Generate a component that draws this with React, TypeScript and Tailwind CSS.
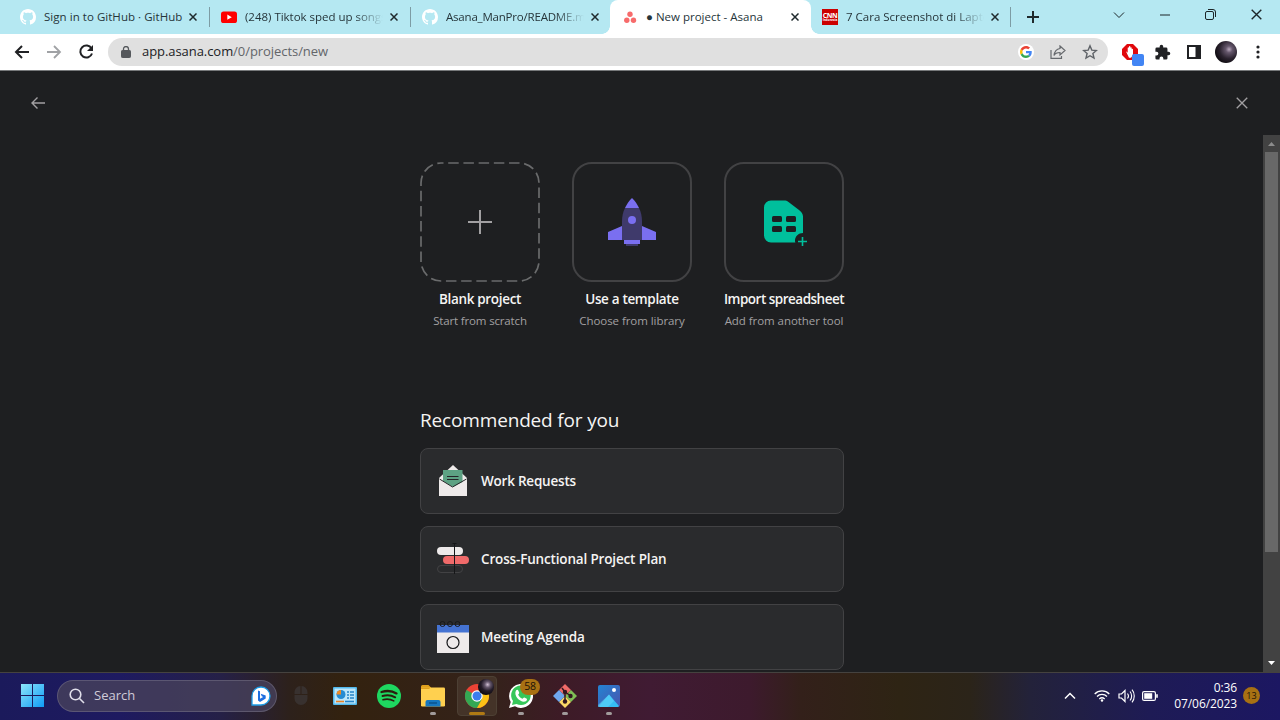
import React from 'react';

type SvgProps = { className?: string };

const Github = () => (
  <svg viewBox="0 0 16 16" className="size-4 shrink-0" fill="#fff">
    <path d="M8 0C3.58 0 0 3.58 0 8c0 3.54 2.29 6.53 5.47 7.59.4.07.55-.17.55-.38 0-.19-.01-.82-.01-1.49-2.01.37-2.53-.49-2.69-.94-.09-.23-.48-.94-.82-1.13-.28-.15-.68-.52-.01-.53.63-.01 1.08.58 1.23.82.72 1.21 1.87.87 2.33.66.07-.52.28-.87.51-1.07-1.78-.2-3.64-.89-3.64-3.95 0-.87.31-1.59.82-2.15-.08-.2-.36-1.02.08-2.12 0 0 .67-.21 2.2.82.64-.18 1.32-.27 2-.27s1.36.09 2 .27c1.53-1.04 2.2-.82 2.2-.82.44 1.1.16 1.92.08 2.12.51.56.82 1.27.82 2.15 0 3.07-1.87 3.75-3.65 3.95.29.25.54.73.54 1.48 0 1.07-.01 1.93-.01 2.2 0 .21.15.46.55.38A8.01 8.01 0 0 0 16 8c0-4.42-3.58-8-8-8z" />
  </svg>
);

const Youtube = () => (
  <svg viewBox="0 0 16 16" className="size-4 shrink-0">
    <rect y="2.5" width="16" height="11.5" rx="2.6" fill="#f00" />
    <path d="M6.3 5.6v5.2L10.8 8.2z" fill="#fff" />
  </svg>
);

const AsanaLogo = () => (
  <svg viewBox="0 0 16 16" className="size-4 shrink-0" fill="#f76b6b">
    <circle cx="8" cy="5.3" r="2.7" />
    <circle cx="4.8" cy="11.3" r="2.7" />
    <circle cx="11.5" cy="11.3" r="2.7" />
  </svg>
);

const Cnn = () => (
  <span className="flex size-4 shrink-0 flex-col items-center justify-center bg-[#c00] font-bold text-white">
    <span className="text-[7px] leading-[7px] tracking-[-0.4px]">CNN</span>
    <span className="text-[3px] leading-[3px]">Indonesia</span>
  </span>
);

const Cross = ({ className }: SvgProps) => (
  <svg viewBox="0 0 8 8" className={className} fill="none" stroke="currentColor">
    <path d="M.5.5l7 7m0-7l-7 7" />
  </svg>
);

type TabProps = { icon: React.ReactNode; title: string; titleClass: string; active?: boolean; divider?: boolean; fade?: boolean; className: string };

function Tab({ icon, title, titleClass, active, divider, fade, className }: TabProps) {
  return (
    <div className={`relative flex h-[34px] shrink-0 items-center ${active ? 'z-10 rounded-t-lg bg-white' : ''} ${className}`}>
      {icon}
      <span className={`ml-2 w-[140px] shrink-0 overflow-hidden whitespace-nowrap text-[11.5px] text-[#26353a] ${fade ? '[mask-image:linear-gradient(90deg,#000_110px,transparent_138px)]' : ''} ${titleClass}`}>{title}</span>
      <Cross className="ml-[5px] size-2 shrink-0 stroke-[1.5] text-[#1f2a2d]" />
      {divider && <span className="absolute right-0 top-[7px] h-5 w-px bg-[#7d9ca4]" />}
      {active && (
        <>
          <span className="absolute bottom-0 -left-2 size-2 bg-[radial-gradient(circle_at_0_0,transparent_7.5px,#fff_8px)]" />
          <span className="absolute -right-2 bottom-0 size-2 bg-[radial-gradient(circle_at_100%_0,transparent_7.5px,#fff_8px)]" />
        </>
      )}
    </div>
  );
}

function TabBar() {
  return (
    <div className="flex h-[34px] bg-[#b5e8f2]">
      <Tab className="w-[210px] pl-5" icon={<Github />} title="Sign in to GitHub · GitHub" titleClass="tracking-[0.04px]" divider />
      <Tab className="w-[201px] pl-[11px]" icon={<Youtube />} title="(248) Tiktok sped up songs" titleClass="tracking-[-0.02px]" divider fade />
      <Tab className="w-[199px] pl-[11px]" icon={<Github />} title="Asana_ManPro/README.md" titleClass="tracking-[-0.2px]" fade />
      <Tab className="w-[201px] pl-3" icon={<AsanaLogo />} title="● New project - Asana" titleClass="tracking-[0px]" active />
      <Tab className="w-[200px] pl-[11px]" icon={<Cnn />} title="7 Cara Screenshot di Laptop" titleClass="tracking-[0px]" divider fade />
      <svg viewBox="0 0 12 12" className="mt-[11px] ml-4 size-3 shrink-0" stroke="#1f2a2d" strokeWidth="2"><path d="M6 0v12M0 6h12" /></svg>
      <div className="ml-[74px] flex h-[29px] items-center text-[#1c2528]">
        <svg viewBox="0 0 12 8" className="h-2 w-3" fill="none" stroke="currentColor"><path d="M1 1.5l5 5 5-5" /></svg>
        <svg viewBox="0 0 10 2" className="ml-[35px] h-0.5 w-2.5" stroke="currentColor"><path d="M0 1h10" /></svg>
        <svg viewBox="0 0 11 11" className="ml-[35px] size-[11px]" fill="none" stroke="currentColor"><rect x=".5" y="2.5" width="8" height="8" rx="1.5" /><path d="M3 .5h5a2.500 2.500 0 0 1 2.500 2.500v5" /></svg>
        <Cross className="ml-[35px] size-[11px]" />
      </div>
    </div>
  );
}

function Toolbar() {
  return (
    <div className="flex h-9 items-start bg-white pt-1 text-[#202124]">
      <svg viewBox="0 0 16 14" className="mt-[7px] ml-[14px] h-[14px] w-4" fill="none" stroke="currentColor" strokeWidth="2"><path d="M15 7H2M8 1L2 7l6 6" /></svg>
      <svg viewBox="0 0 16 14" className="mt-[7px] ml-4 h-[14px] w-4" fill="none" stroke="#a0a2a5" strokeWidth="1.8"><path d="M1 7h13M8 1l6 6-6 6" /></svg>
      <svg viewBox="0 0 16 16" className="mt-1.5 ml-4 size-4" fill="none" stroke="currentColor" strokeWidth="2"><path d="M13.5 4.500A6 6 0 1 0 14 9.500" /><path d="M15 1v6H9z" fill="currentColor" stroke="none" /></svg>
      <div className="ml-[14px] flex h-7 w-[1000px] shrink-0 items-center rounded-full bg-[#e0e0e0] pl-[13px] text-[13px]">
        <svg viewBox="0 0 10 12" className="h-3 w-2.5" fill="none" stroke="#55585c"><rect y="4.5" width="9" height="7" x=".5" rx=".8" fill="#55585c" /><path d="M2.500 5V3a2.500 2.500 0 0 1 5 0v2" strokeWidth="1.300" /></svg>
        <span className="ml-[11px] grow whitespace-nowrap tracking-[-0.06px] text-[#202124]">app.asana.com<span className="text-[#63666a]">/0/projects/new</span></span>
        <span className="flex size-4 items-center justify-center rounded-full bg-white">
          <svg viewBox="0 0 48 48" className="size-3">
            <path fill="#EA4335" d="M24 9.500c3.540 0 6.710 1.220 9.210 3.600l6.850-6.850C35.900 2.380 30.470 0 24 0 14.620 0 6.510 5.380 2.560 13.220l7.980 6.190C12.430 13.720 17.740 9.500 24 9.500z" />
            <path fill="#4285F4" d="M46.980 24.550c0-1.570-.15-3.090-.38-4.550H24v9.020h12.940c-.58 2.960-2.260 5.480-4.780 7.180l7.730 6c4.510-4.180 7.090-10.360 7.090-17.650z" />
            <path fill="#FBBC05" d="M10.530 28.590A14.500 14.500 0 0 1 9.770 24c0-1.600.27-3.140.76-4.590l-7.980-6.190A23.900 23.900 0 0 0 0 24c0 3.880.92 7.540 2.560 10.780z" />
            <path fill="#34A853" d="M24 48c6.480 0 11.930-2.130 15.890-5.810l-7.730-6A14.600 14.600 0 0 1 24 38.490c-6.260 0-11.570-4.220-13.470-9.910l-7.980 6.190C6.510 42.620 14.620 48 24 48z" />
          </svg>
        </span>
        <svg viewBox="0 0 16 14" className="ml-4 h-[14px] w-4" fill="none" stroke="#66696d" strokeWidth="1.2"><path d="M1 5v8.400h10.500V11" /><path d="M10 1l5 4.500-5 4.500V7.500C7 7.500 5 8.500 4 10.500 4.500 6.500 6.500 4 10 3.500z" /></svg>
        <svg viewBox="0 0 16 16" className="mr-[10px] ml-4 size-4" fill="none" stroke="#5f6368" strokeWidth="1.400"><path d="M8 1.800l1.800 4.300 4.600.4-3.500 3 1.100 4.600L8 11.700l-4 2.400 1.100-4.600-3.500-3 4.600-.4z" /></svg>
      </div>
      <svg viewBox="0 0 24 24" className="mt-[5px] ml-[13px] size-6 shrink-0">
        <path d="M6 1h6l5 5v6l-5 5H6l-5-5V6z" fill="#e1080c" />
        <path d="M5 8.500c1 0 1.500 1 1.700 1.500V5c0-1 1.300-1 1.300 0V3.700c0-1 1.400-1 1.400 0V5c0-1 1.300-1 1.300 0v1.500c0-.9 1.300-.9 1.300 0V12l-2 2.800H8z" fill="#fff" />
        <rect x="11" y="11" width="12" height="12" rx="2" fill="#4285f4" />
      </svg>
      <svg viewBox="0 0 24 24" className="mt-[6px] ml-[9px] size-[17px] shrink-0" fill="currentColor"><path d="M20.500 11H19V7a2 2 0 0 0-2-2h-4V3.500a2.500 2.500 0 0 0-5 0V5H4a2 2 0 0 0-2 2v3.800h1.500a2.700 2.700 0 0 1 0 5.400H2V20a2 2 0 0 0 2 2h3.800v-1.500a2.700 2.700 0 0 1 5.400 0V22H17a2 2 0 0 0 2-2v-4h1.500a2.500 2.500 0 0 0 0-5z" /></svg>
      <svg viewBox="0 0 14 14" className="mt-[7px] ml-[16px] size-[14px] shrink-0"><path fillRule="evenodd" d="M0 0h14v14H0zM2 2v10h6.500V2z" fill="currentColor" /></svg>
      <span className="mt-[3px] ml-[14px] size-[22px] shrink-0 rounded-full bg-[radial-gradient(circle_at_64%_38%,#b9a8bd_0,#66586d_17%,#2a222e_48%,#120e14_72%)]" />
      <svg viewBox="0 0 4 14" className="mt-[7px] ml-[19px] h-[14px] w-1 shrink-0" fill="currentColor"><circle cx="2" cy="2" r="1.6" /><circle cx="2" cy="7" r="1.6" /><circle cx="2" cy="12" r="1.6" /></svg>
    </div>
  );
}

function Choice({ children, title, sub, dashed, titleClass, subClass }: { children?: React.ReactNode; title: string; sub: string; dashed?: boolean; titleClass: string; subClass: string }) {
  return (
    <div className="flex w-[120px] flex-col items-center whitespace-nowrap">
      <div className={`flex size-[120px] items-center justify-center rounded-[20px] ${dashed ? '' : 'border-2 border-[#424244]'}`}>
        {dashed ? (
          <svg viewBox="0 0 120 120" className="size-[120px]" fill="none">
            <path d="M21 1h78a20 20 0 0 1 20 20v78a20 20 0 0 1-20 20H21a20 20 0 0 1-20-20V21A20 20 0 0 1 21 1z" stroke="#6a6b6c" strokeWidth="1.7" strokeDasharray="10.5 4.71" strokeDashoffset="8" />
            <path d="M60 48v24M48 60h24" stroke="#a2a0a2" strokeWidth="2" />
          </svg>
        ) : children}
      </div>
      <span className={`mt-[7px] text-[13.5px] leading-5 font-semibold text-[#f5f4f3] ${titleClass}`}>{title}</span>
      <span className={`mt-[3px] text-[11.5px] leading-[18px] text-[#a2a0a2] ${subClass}`}>{sub}</span>
    </div>
  );
}

const Rocket = () => (
  <svg viewBox="0 0 48 48" className="size-12">
    <path d="M14 28L0 34v8h14zM34 28l14 6v8H34z" fill="#7a6ff0" />
    <path d="M17 10h14c2 4 3 8.500 3 13v19H14V23c0-4.500 1-9 3-13z" fill="#3f3a6b" />
    <path d="M24 0c3 3 5.500 6.500 7 10H17c1.500-3.500 4-7 7-10z" fill="#7a6ff0" />
    <circle cx="24" cy="22" r="4" fill="#7a6ff0" />
    <path d="M16 42h16v4H16z" fill="#7a6ff0" /><path d="M18 46h12v2H18z" fill="#3f3a6b" />
  </svg>
);

const Sheet = () => (
  <svg viewBox="0 0 48 48" className="size-12">
    <path d="M11 2.500h13c2 0 3 .4 4.500 1.500l10.500 8c2.500 2 4 4 4 6.500V35c-4.500 0-8 3.500-8 7.500 0 1 .1 1.500.4 2H11a7 7 0 0 1-7-7v-28a7 7 0 0 1 7-7z" fill="#00bf9c" />
    <g fill="#1e1f21"><rect x="12" y="18" width="10" height="6" rx="1.5" /><rect x="26" y="18" width="10" height="6" rx="1.5" /><rect x="12" y="28" width="10" height="6" rx="1.5" /><rect x="26" y="28" width="10" height="6" rx="1.5" /></g>
    <path d="M42.500 39v9M38 43.500h9" stroke="#00bf9c" strokeWidth="1.6" />
  </svg>
);

const Envelope = () => (
  <svg viewBox="0 0 32 32" className="size-8">
    <path d="M2 13L16 0l14 13v18H2z" fill="#eeeaea" />
    <path d="M6 5h19.500v12L16 22 6 16z" fill="#5da283" />
    <path d="M2.500 14L15.500 22 29.500 14M10 11.500h11.500M10 14.500h11.500" fill="none" stroke="#252628" />
  </svg>
);

const Gantt = () => (
  <svg viewBox="0 0 32 32" className="size-8">
    <rect y="4" width="26" height="8" rx="4" fill="#eeeaea" /><rect x="6" y="13" width="26" height="8" rx="4" fill="#f06a6a" />
    <rect x=".5" y="22.5" width="25" height="7" rx="3.5" fill="none" stroke="#424244" />
    <path d="M17.500 1v30M15.500.5h4" stroke="#151618" />
  </svg>
);

const Calendar = () => (
  <svg viewBox="0 0 32 32" className="size-8">
    <path d="M0 4h32v28H0z" fill="#eeeaea" /><path d="M0 4h32v7.500H0z" fill="#4573d2" />
    <g fill="none" stroke="#17181a"><circle cx="16" cy="21.5" r="6" strokeWidth="1.2" /><circle cx="5.5" cy="3" r="2.5" /><circle cx="13" cy="3" r="2.5" /><circle cx="20.5" cy="3" r="2.5" /></g>
  </svg>
);

function Row({ icon, title, className }: { icon: React.ReactNode; title: string; className: string }) {
  return (
    <div className="flex h-[66px] shrink-0 items-center gap-3 rounded-lg border border-[#424244] bg-[#2a2b2d] px-4">
      {icon}
      <span className={`whitespace-nowrap text-[13.5px] font-semibold text-[#f5f4f3] ${className}`}>{title}</span>
    </div>
  );
}

function Page() {
  return (
    <div className="flex h-[602px] flex-col overflow-hidden border-t border-[#77797b] bg-[#1e1f21]">
      <div className="flex h-16 shrink-0 items-center justify-between pr-8 pl-[31px] text-[#a2a0a2]">
        <svg viewBox="0 0 14 12" className="h-3 w-[14px]" fill="none" stroke="currentColor" strokeWidth="1.4"><path d="M14 6H1M6.500.5L1 6l5.500 5.500" /></svg>
        <Cross className="size-3 stroke-[0.9]" />
      </div>
      <div className="flex min-h-0 grow">
        <div className="flex grow flex-col overflow-hidden pt-[27px] pl-[420px]">
          <div className="flex shrink-0 gap-8">
            <Choice title="Blank project" sub="Start from scratch" dashed titleClass="tracking-[-0.32px]" subClass="tracking-[-0.16px]" />
            <Choice title="Use a template" sub="Choose from library" titleClass="tracking-[-0.34px]" subClass="tracking-[-0.06px]"><Rocket /></Choice>
            <Choice title="Import spreadsheet" sub="Add from another tool" titleClass="tracking-[-0.5px]" subClass="tracking-[-0.06px]"><Sheet /></Choice>
          </div>
          <h2 className="mt-[76px] shrink-0 text-[19px] leading-7 tracking-[-0.16px] text-[#f5f4f3]">Recommended for you</h2>
          <div className="mt-[14px] flex w-[424px] shrink-0 flex-col gap-3">
            <Row icon={<Envelope />} title="Work Requests" className="tracking-[-0.22px]" />
            <Row icon={<Gantt />} title="Cross-Functional Project Plan" className="tracking-[-0.16px]" />
            <Row icon={<Calendar />} title="Meeting Agenda" className="tracking-[-0.14px]" />
          </div>
        </div>
        <div className="flex w-[17px] shrink-0 flex-col items-center bg-[#424242]">
          <svg viewBox="0 0 17 17" className="size-[17px]" fill="#8c8c8c"><path d="M5 11l3.500-4 3.500 4z" /></svg>
          <div className="h-[400px] w-[13px] bg-[#686868]" />
          <svg viewBox="0 0 17 17" className="mt-auto size-[17px]" fill="#fff"><path d="M5 6l3.500 4L12 6z" /></svg>
        </div>
      </div>
    </div>
  );
}

function TaskbarApp({ children, running, active }: { children: React.ReactNode; running?: boolean; active?: boolean }) {
  return (
    <div className={`relative flex h-10 w-10 shrink-0 items-center justify-center rounded ${active ? 'border border-[#4d4034] bg-[#443328]' : ''}`}>
      {children}
      {running && <span className="absolute bottom-px h-[3px] w-1.5 rounded-full bg-[#a19b9b]" />}
      {active && <span className="absolute bottom-0 h-[3px] w-4 rounded-full bg-[#b07a14]" />}
    </div>
  );
}

function Taskbar() {
  return (
    <div className="flex h-12 items-center border-t border-[#45423f] bg-[linear-gradient(90deg,#1b1a5b_0px,#1e1a60_120px,#252047_220px,#2d211b_290px,#33220f_345px,#34221a_490px,#3d1b26_560px,#401b33_650px,#3d1a2d_750px,#33201a_800px,#2e2414_900px,#2b2419_970px,#23223a_1030px,#1e1b55_1150px,#1c1762_1280px)] pb-0.5 text-white">
      <svg viewBox="0 0 23 23" className="ml-[21px] size-[23px]">
        <defs><linearGradient id="win" x2="1" y2="1"><stop stopColor="#8ce5fb" /><stop offset="1" stopColor="#0f9bf5" /></linearGradient></defs>
        <path d="M0 0h11v11H0zm12 0h11v11H12zM0 12h11v11H0zm12 0h11v11H12z" fill="url(#win)" />
      </svg>
      <div className="ml-[13px] flex h-8 w-[220px] items-center rounded-full border border-white/15 bg-[#47415b]/80 pr-[5px] pl-[11px]">
        <svg viewBox="0 0 16 16" className="size-4" fill="none" stroke="#e0deea" strokeWidth="1.6"><circle cx="6.5" cy="6.5" r="5.3" /><path d="M10.500 10.500l4.500 4.500" /></svg>
        <span className="ml-[9px] grow text-[13px] tracking-[0px] text-[#cfcbd8]">Search</span>
        <svg viewBox="0 0 20 20" className="size-5">
          <path d="M1 19V10a9 9 0 1 1 9 9z" fill="#fff" stroke="#1c9de8" strokeWidth="1.3" />
          <path d="M7 4.500l2 .8v7.500l3.200-1.800-1.500-.8-1-2.400 5 1.800v2.800L9 16l-2-1.500z" fill="#1e6fe0" />
        </svg>
      </div>
      <div className="ml-1 flex gap-1">
        <TaskbarApp><svg viewBox="0 0 14 19" className="h-[19px] w-[14px]" fill="#38312f"><path d="M6.500 0v8H.5V6.500C.5 3 3 0 6.500 0zM7.500 0c3.500 0 6 3 6 6.500V8h-6zM.5 9h13v3.500a6.500 6.500 0 0 1-13 0z" /></svg></TaskbarApp>
        <TaskbarApp>
          <svg viewBox="0 0 24 18" className="h-[18px] w-6"><rect width="24" height="18" rx="1" fill="#52b9ec" /><rect x="1.5" y="1.5" width="21" height="15" fill="#bce6fa" /><circle cx="8" cy="7.5" r="4.5" fill="#258bd2" /><path d="M8 7.500V3a4.500 4.500 0 0 0-4.500 4.500z" fill="#f08a24" /><path d="M14 5h2m1 0h4M14 8h2m1 0h4M14 11h2m1 0h4" stroke="#2684c8" strokeWidth="1.5" /><path d="M3 14.500h8" stroke="#e78328" strokeWidth="1.6" /><path d="M12 14.500h9" stroke="#2684c8" strokeWidth="1.6" /></svg>
        </TaskbarApp>
        <TaskbarApp>
          <svg viewBox="0 0 24 24" className="size-6"><circle cx="12" cy="12" r="12" fill="#1ed760" /><g fill="none" stroke="#2b1d0d" strokeLinecap="round"><path d="M4.500 8c5-1.500 11-1 15 1.400" strokeWidth="2.3" /><path d="M5.500 12c4.500-1.300 9-.8 12.700 1.300" strokeWidth="1.9" /><path d="M6 15.700c4-1 7.500-.6 10.800 1.200" strokeWidth="1.6" /></g></svg>
        </TaskbarApp>
        <TaskbarApp running>
          <svg viewBox="0 0 24 22" className="h-[22px] w-6"><path d="M0 1.500A1.500 1.500 0 0 1 1.500 0h6L10 2.500V6H0z" fill="#e0a01c" /><rect y="2.5" width="24" height="19" rx="1.3" fill="#ffd04f" /><path d="M0 4h8l2-1.500H0z" fill="#e0a01c" /><path d="M4.500 21.500V17a2 2 0 0 1 2-2h11a2 2 0 0 1 2 2v4.500z" fill="#1677bf" /><path d="M8 18h8" stroke="#0b538e" strokeWidth="1.5" /></svg>
        </TaskbarApp>
        <TaskbarApp active>
          <svg viewBox="0 0 24 24" className="size-6"><circle cx="12" cy="12" r="12" fill="#ea4335" /><path d="M12 12L1.600 6A12 12 0 0 0 12 24l6-10z" fill="#34a853" /><path d="M12 6.500h10.700A12 12 0 0 1 12 24l5-9z" fill="#fbc116" /><circle cx="12" cy="12" r="5.7" fill="#fff" /><circle cx="12" cy="12" r="4.5" fill="#3b7ded" /></svg>
          <span className="absolute top-0.5 right-[2px] size-4 rounded-full bg-[radial-gradient(circle_at_60%_35%,#d0c0d5_0,#66586d_20%,#241c29_45%,#0e0a11_72%)]" />
        </TaskbarApp>
        <TaskbarApp running>
          <svg viewBox="0 0 24 24" className="size-6"><path d="M0 24l1.700-6A12 12 0 1 1 6 22.300z" fill="#fff" /><path d="M3 21l1-4A9.800 9.800 0 1 1 7.500 20z" fill="#36c75a" /><path d="M7 6.500c1-1 2-.8 2.400.3l.8 2c.2.800-.8 1.400-1 2 1 2 2.200 3 4.200 4 .6-.2 1.300-1.600 2-1.300l2.400 1.200c.5.400 0 2-1 2.600C12 19.500 4 12 7 6.500z" fill="#fff" /></svg>
          <span className="absolute top-[3px] left-[19px] flex h-4 w-[20px] items-center justify-center rounded-full bg-[#a87113] text-[10.5px] tracking-[-0.3px] text-[#1b1208]">58</span>
        </TaskbarApp>
        <TaskbarApp running>
          <svg viewBox="0 0 24 24" className="size-6"><path d="M12 0l6 6-6 6-6-6z" fill="#f06b68" /><path d="M18 6l6 6-6 6-6-6z" fill="#7fbf55" /><path d="M12 12l6 6-6 6-6-6z" fill="#fbd966" /><path d="M6 6l6 6-6 6-6-6z" fill="#6fa7ee" /><path d="M9 4l3 4v10M12 8l6 4" fill="none" stroke="#321820" strokeWidth="1.5" /><g fill="#321820"><circle cx="12" cy="8" r="2.2" /><circle cx="17.5" cy="12" r="2.2" /><circle cx="12" cy="17.5" r="2.2" /></g></svg>
        </TaskbarApp>
        <TaskbarApp running>
          <svg viewBox="0 0 22 22" className="size-[22px]"><defs><linearGradient id="sky" x2="1" y2="1"><stop stopColor="#2384d3" /><stop offset="1" stopColor="#4a53ad" /></linearGradient></defs><rect width="22" height="22" rx="2" fill="url(#sky)" /><path d="M1 21L11 9.500 21 21l-1 1H2z" fill="#35bdf4" /><path d="M11 9.500L0 20v2h10l6-6z" fill="#5fd3fa" opacity=".6" /><circle cx="16" cy="5" r="2" fill="#fff" /></svg>
        </TaskbarApp>
      </div>
      <div className="ml-auto flex items-center pr-[19px]">
        <svg viewBox="0 0 12 8" className="h-2 w-3" fill="none" stroke="#fff" strokeWidth="1.5"><path d="M1 6.500l5-5 5 5" /></svg>
        <svg viewBox="0 0 16 13" className="ml-[18px] h-[13px] w-4" fill="none" stroke="#fff" strokeWidth="1.3"><path d="M.7 5a10.200 10.200 0 0 1 14.600 0M3 7.500a7 7 0 0 1 10 0M5.300 10a4 4 0 0 1 5.400 0" /><circle cx="8" cy="11.5" r="1.2" fill="#fff" stroke="none" /></svg>
        <svg viewBox="0 0 17 14" className="ml-2 h-[14px] w-[17px]" fill="none" stroke="#fff" strokeWidth="1.2"><path d="M1 5h2.500L7 1.500v11L3.500 9H1z" /><path d="M9.500 4.500c1.200 1.500 1.200 3.500 0 5M12 2.500c2.200 2.500 2.200 6.500 0 9M14 .7c3 3.500 3 9 0 12.600" strokeWidth="1.1" /></svg>
        <svg viewBox="0 0 16 10" className="ml-[7px] h-2.5 w-4" fill="none" stroke="#fff" strokeWidth="1.2"><rect x=".6" y=".6" width="12.8" height="8.8" rx="1.5" /><rect x="2.2" y="2.2" width="8" height="5.6" fill="#fff" stroke="none" /><path d="M15 3.200v3.600" strokeWidth="1.6" /></svg>
        <div className="ml-[17px] flex w-[62px] flex-col items-end text-[12px] leading-4 tracking-[-0.1px] whitespace-nowrap"><span>0:36</span><span>07/06/2023</span></div>
        <span className="ml-[6px] flex size-[17px] items-center justify-center rounded-full bg-[#a87113] text-[9px] text-[#1b1208]">13</span>
        <span className="w-px" />
      </div>
    </div>
  );
}

export default function App() {
  return (
    <div className="h-[720px] w-[1280px] overflow-hidden bg-[#1e1f21] font-['Open_Sans','Noto_Sans',sans-serif]">
      <TabBar />
      <Toolbar />
      <Page />
      <Taskbar />
    </div>
  );
}
